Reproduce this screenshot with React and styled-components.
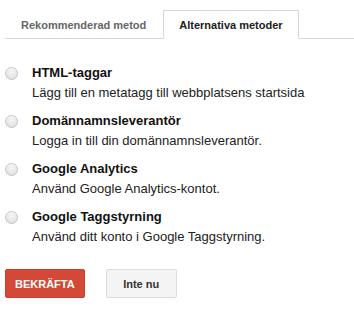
import React, { useState } from 'react';
import styled, { createGlobalStyle } from 'styled-components';

const GlobalStyle = createGlobalStyle`
  body {
    margin: 0;
    background: #ffffff;
    font-family: "Liberation Sans", Arial, sans-serif;
  }
`;

const Page = styled.div`
  width: 354px;
  padding: 10px 0 0 5px;
  box-sizing: border-box;
`;

const TabBar = styled.div`
  display: flex;
  align-items: flex-end;
  gap: 1px;
  height: 28px;
  border-bottom: 1px solid #d6d6d6;
`;

const Tab = styled.button`
  height: ${(p) => (p.$active ? '29px' : '28px')};
  margin-bottom: ${(p) => (p.$active ? '-1px' : '0')};
  padding: 0 15px;
  border: 1px solid ${(p) => (p.$active ? '#d6d6d6' : 'transparent')};
  border-bottom: ${(p) => (p.$active ? '1px solid #ffffff' : 'none')};
  background: #ffffff;
  font-family: inherit;
  font-size: 11px;
  font-weight: bold;
  color: ${(p) => (p.$active ? '#202020' : '#666666')};
  cursor: pointer;
`;

const List = styled.div`
  display: flex;
  flex-direction: column;
  gap: 10px;
  padding-top: 25px;
`;

const Option = styled.label`
  display: flex;
  align-items: flex-start;
  gap: 14px;
  cursor: pointer;
`;

const Radio = styled.span`
  flex: none;
  width: 11px;
  height: 11px;
  margin-top: 3px;
  border-radius: 50%;
  border: 1px solid #c4c4c4;
  background: radial-gradient(circle at 50% 40%, #f6f6f6 0%, #e6e6e6 60%, #d8d8d8 100%);
  box-shadow: inset 0 1px 1px rgba(255, 255, 255, 0.8);
  position: relative;

  &::after {
    content: '';
    display: ${(p) => (p.$checked ? 'block' : 'none')};
    position: absolute;
    left: 3px;
    top: 3px;
    width: 5px;
    height: 5px;
    border-radius: 50%;
    background: #444;
  }
`;

const OptionText = styled.div`
  display: flex;
  flex-direction: column;
  gap: 2px;
`;

const OptionTitle = styled.div`
  font-size: 13px;
  line-height: 18px;
  font-weight: bold;
  color: #111111;
`;

const OptionDesc = styled.div`
  font-size: 13px;
  line-height: 18px;
  color: #222222;
`;

const Actions = styled.div`
  display: flex;
  gap: 21px;
  padding-top: 23px;
`;

const Button = styled.button`
  height: 29px;
  padding: 0 ${(p) => (p.$primary ? '9px' : '16px')};
  min-width: ${(p) => (p.$primary ? '78px' : '71px')};
  border-radius: 2px;
  border: 1px solid ${(p) => (p.$primary ? '#c6412f' : '#dcdcdc')};
  background: ${(p) => (p.$primary ? '#d44837' : '#f4f4f4')};
  color: ${(p) => (p.$primary ? '#ffffff' : '#333333')};
  font-family: inherit;
  font-size: 11px;
  font-weight: bold;
  cursor: pointer;
`;

const options = [
  { title: 'HTML-taggar', desc: 'Lägg till en metatagg till webbplatsens startsida' },
  { title: 'Domännamnsleverantör', desc: 'Logga in till din domännamnsleverantör.' },
  { title: 'Google Analytics', desc: 'Använd Google Analytics-kontot.' },
  { title: 'Google Taggstyrning', desc: 'Använd ditt konto i Google Taggstyrning.' },
];

export default function App() {
  const [tab, setTab] = useState(1);
  const [selected, setSelected] = useState(null);

  return (
    <>
      <GlobalStyle />
      <Page>
        <TabBar>
          <Tab $active={tab === 0} onClick={() => setTab(0)}>
            Rekommenderad metod
          </Tab>
          <Tab $active={tab === 1} onClick={() => setTab(1)}>
            Alternativa metoder
          </Tab>
        </TabBar>
        <List>
          {options.map((o, i) => (
            <Option key={o.title} onClick={() => setSelected(i)}>
              <Radio $checked={selected === i} />
              <OptionText>
                <OptionTitle>{o.title}</OptionTitle>
                <OptionDesc>{o.desc}</OptionDesc>
              </OptionText>
            </Option>
          ))}
        </List>
        <Actions>
          <Button $primary>BEKRÄFTA</Button>
          <Button>Inte nu</Button>
        </Actions>
      </Page>
    </>
  );
}
